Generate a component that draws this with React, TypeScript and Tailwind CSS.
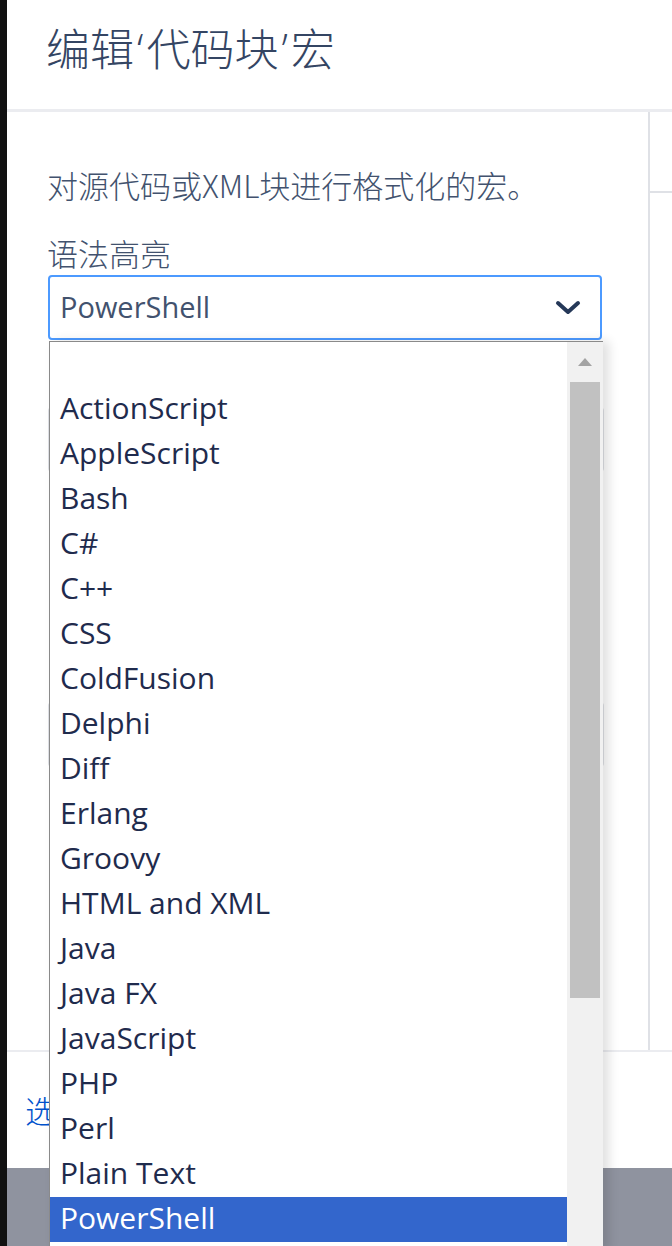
import React from "react";

const items = [
  "",
  "ActionScript",
  "AppleScript",
  "Bash",
  "C#",
  "C++",
  "CSS",
  "ColdFusion",
  "Delphi",
  "Diff",
  "Erlang",
  "Groovy",
  "HTML and XML",
  "Java",
  "Java FX",
  "JavaScript",
  "PHP",
  "Perl",
  "Plain Text",
  "PowerShell",
];

const cjk = "font-['Noto_Sans_CJK_SC',sans-serif]";
const latin = "font-['Open_Sans','Noto_Sans_CJK_SC',sans-serif]";

export default function App() {
  return (
    <div className="relative w-[672px] h-[1246px] overflow-hidden bg-[#111111] flex">
      <div className="w-[7px] shrink-0" />
      <div className="flex-1 flex flex-col bg-white">
        {/* header */}
        <div className="h-[112px] shrink-0 border-b-[3px] border-[#ebecf0] pl-[39px] pt-[17px]">
          <h1 className={`${cjk} text-[44px] leading-[60px] text-[#344563] font-light`}>
            编辑<span className={`${latin} px-[3px]`}>‘</span>代码块<span className={`${latin} px-[3px]`}>’</span>宏
          </h1>
        </div>
        {/* body */}
        <div className="h-[938px] shrink-0 flex">
          <div className="w-[641px] shrink-0 pl-[40px] pr-[46px]">
            <p className={`${cjk} mt-[53px] text-[31px] leading-[40px] text-[#42526e] font-light whitespace-nowrap`}>
              对源代码或XML块进行格式化的宏。
            </p>
            <p className={`${cjk} mt-[28px] text-[31px] leading-[40px] text-[#42526e] font-light`}>语法高亮</p>
            <div className="mt-[2px] ml-[1px] h-[65px] w-[554px] rounded-[4px] border-2 border-[#4c9aff] flex items-center justify-between pl-[10px] pr-[18px]">
              <span className={`${latin} text-[29px] text-[#42526e] pb-[2px]`}>PowerShell</span>
              <svg width="28" height="18" viewBox="0 0 28 18">
                <path d="M4 4 L14 13 L24 4" fill="none" stroke="#253858" strokeWidth="4" strokeLinecap="round" strokeLinejoin="round" />
              </svg>
            </div>
            <div className="mt-[67px] ml-[1px] h-[65px] w-[556px] rounded-[4px] border-2 border-[#dfe1e6]" />
            <div className="mt-[230px] ml-[1px] h-[65px] w-[556px] rounded-[4px] border-2 border-[#dfe1e6]" />
          </div>
          <div className="flex-1 border-l-2 border-[#dfe1e6]">
            <div className="h-[81px] border-b-2 border-[#dfe1e6]" />
          </div>
        </div>
        {/* footer */}
        <div className="h-[118px] shrink-0 border-t-2 border-[#ebecf0] flex items-center pl-[18px]">
          <span className={`${cjk} text-[31px] text-[#0052cc] font-light`}>选</span>
        </div>
        <div className="flex-1 bg-[#8f939f]" />
      </div>

      {/* dropdown list */}
      <div className="absolute left-[49px] top-[341px] w-[554px] h-[910px] bg-white border-l border-t border-[#8a8a8a] shadow-[6px_0_10px_rgba(0,0,0,0.12)] flex">
        <ul className="flex-1 flex flex-col">
          {items.map((it, i) => {
            const sel = it === "PowerShell";
            return (
              <li
                key={i}
                className={`${latin} h-[45px] shrink-0 flex items-center pl-[10px] pb-[4px] text-[30px] leading-none ${
                  sel ? "bg-[#3366cc] text-white" : "text-[#1f2b4d]"
                }`}
              >
                {it}
              </li>
            );
          })}
        </ul>
        <div className="w-[36px] shrink-0 bg-[#f1f1f1] flex flex-col items-center">
          <div className="h-[40px] w-full flex items-center justify-center">
            <svg width="16" height="10" viewBox="0 0 16 10">
              <path d="M1 9 L8 1 L15 9 Z" fill="#a3a3a3" />
            </svg>
          </div>
          <div className="w-[30px] h-[616px] bg-[#c1c1c1]" />
        </div>
      </div>
    </div>
  );
}
